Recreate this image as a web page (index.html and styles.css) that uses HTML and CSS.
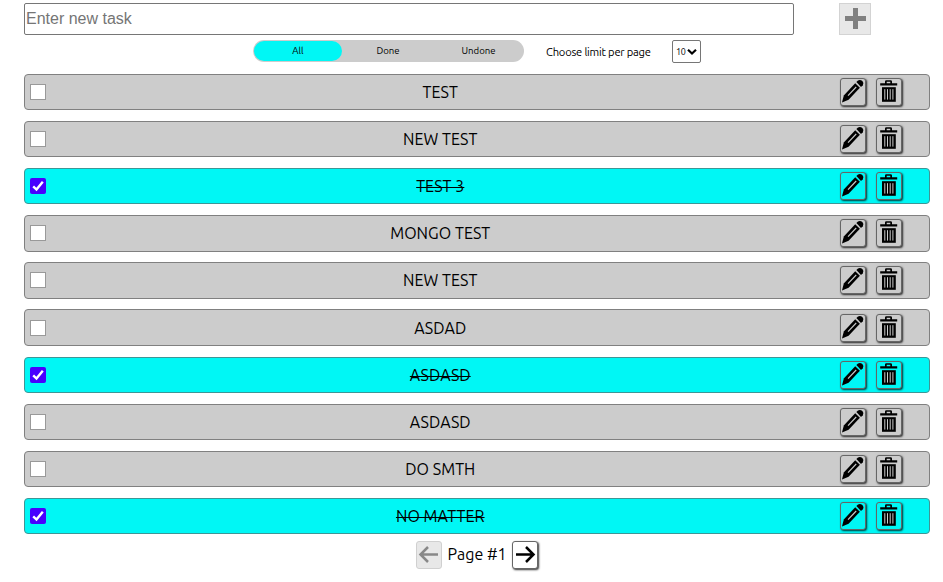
FILE: index.html
```
<!DOCTYPE html>
<html lang="en">
<head>
<meta charset="utf-8">
<title>Tasks</title>
<link rel="stylesheet" href="styles.css">
</head>
<body>
<svg class="defs" aria-hidden="true">
  <symbol id="pencil" viewBox="0 0 24 26">
    <path d="M1 23.4 2.8 16.6 14.2 4.2 18.9 8.8 7.6 20.8Z"/>
    <path d="M15.4 3 17 1.4Q19.2.2 21.4 2.1 23.2 4.2 21.8 6.2L20 8Z"/>
    <path class="shine" d="M7 16.7 15.2 8"/>
  </symbol>
  <symbol id="trash" viewBox="0 0 24 26">
    <path d="M3.2 4.2H8V2.6Q8 1.2 9.4 1.2H13.6Q15 1.2 15 2.6V4.2H20.2V6.6H3.2ZM9.7 4.2H13.3V2.8H9.7Z" fill-rule="evenodd"/>
    <path d="M5 8.2H18.8V22.8H5Z"/>
    <path class="slats" d="M7.8 10.2V20.6M10.5 10.2V20.6M13.2 10.2V20.6M15.9 10.2V20.6"/>
  </symbol>
</svg>
<main class="app">
  <form class="new-task">
    <input class="new-task-input" type="text" placeholder="Enter new task">
    <button class="add" type="button" disabled aria-label="Add"><svg viewBox="0 0 30 30"><path d="M5 14.5H26M15.5 4V25"/></svg></button>
  </form>
  <div class="toolbar">
    <div class="tabs"><span class="tab active">All</span><span class="tab">Done</span><span class="tab">Undone</span></div>
    <span class="limit-label">Choose limit per page</span>
    <div class="limit"><span>10</span><svg viewBox="0 0 10 8"><path d="M1 1.8 5 5.6 9 1.8"/></svg></div>
  </div>
  <ul class="tasks" id="tasks"></ul>
  <nav class="pager">
    <button class="page-btn" disabled aria-label="Previous"><svg viewBox="0 0 24 26"><path d="M21 12.5H3.5M11 5 3.5 12.5 11 20"/></svg></button>
    <span class="page-label">Page #1</span>
    <button class="page-btn" aria-label="Next"><svg viewBox="0 0 24 26"><path d="M3 12.5H20.5M13 5 20.5 12.5 13 20"/></svg></button>
  </nav>
</main>
<script src="app.js"></script>
</body>
</html>
```
FILE: app.js
```
const tasks = [
  ["TEST", false], ["NEW TEST", false], ["TEST 3", true], ["MONGO TEST", false],
  ["NEW TEST", false], ["ASDAD", false], ["ASDASD", true], ["ASDASD", false],
  ["DO SMTH", false], ["NO MATTER", true]
];
document.getElementById("tasks").innerHTML = tasks.map(([name, done]) => `
  <li class="task${done ? " done" : ""}">
    <span class="check">${done ? '<svg viewBox="0 0 16 16"><path d="M3.2 8.3 6.5 11.5 12.8 3.8"/></svg>' : ""}</span>
    <span class="name"><span>${name}</span></span>
    <button class="icon-btn" aria-label="Edit"><svg><use href="#pencil"/></svg></button>
    <button class="icon-btn" aria-label="Delete"><svg><use href="#trash"/></svg></button>
  </li>`).join("");
```
FILE: styles.css
```
* { box-sizing: border-box; }
body { min-height: 582px; margin: 0; background: #fff; color: #000; font-family: Ubuntu, "Noto Sans", sans-serif; font-size: 16px; }
.defs { display: block; width: 0; height: 0; }
.app { width: 906px; margin-left: 24px; padding-top: 3px; }
button { padding: 0; font: inherit; }
svg { display: block; }

.new-task { display: flex; height: 32px; margin: 0; }
.new-task-input { width: 770px; height: 32px; padding: 0 1px; border: 1px solid #767676; border-radius: 2px; font: 16px "Liberation Sans", sans-serif; }
.new-task-input::placeholder { color: #757575; }
.add { width: 32px; height: 32px; margin-left: 45px; border: 1px solid #d3d3d3; background: #e8e8e8; }
.add svg { width: 30px; height: 30px; fill: none; stroke: #808080; stroke-width: 5; }

.toolbar { display: flex; height: 23px; margin-top: 5px; margin-left: 229px; }
.tabs { display: flex; justify-content: space-between; width: 271px; height: 22px; padding: 1px; background: #ccc; border-radius: 11px; }
.tab { width: 89px; height: 20px; border-radius: 10px; text-align: center; font-size: 9.6px; line-height: 19px; }
.tab.active { width: 88px; background: #00f7f5; }
.limit-label { width: 126px; margin-left: 22px; font-size: 11.2px; line-height: 24px; white-space: nowrap; letter-spacing: -.22px; }
.limit { display: flex; align-items: center; width: 29px; height: 23px; padding-left: 3px; border: 1px solid #767676; border-radius: 2px; font-size: 9px; letter-spacing: -.3px; }
.limit svg { flex: none; width: 10px; height: 8px; margin-left: 1.5px; fill: none; stroke: #000; stroke-width: 2.2; }

.tasks { display: flex; flex-direction: column; gap: 10.69px; margin: 10.85px 0 0; padding: 0; list-style: none; }
.task { display: flex; align-items: center; height: 36.423px; padding-left: 5px; background: #ccc; border: 1px solid #808080; border-radius: 4px; }
.task.done { background: #00f7f5; border-color: #3e9696; }
.check { width: 16px; height: 16px; background: #fff; border: 1px solid #999; }
.done .check { background: #4800ff; border: 0; border-radius: 2px; }
.check svg { width: 16px; height: 16px; fill: none; stroke: #fff; stroke-width: 2.4; }
.name { width: 789px; padding-right: .5px; margin-right: 5px; text-align: center; line-height: 24px; letter-spacing: .06px; }
.done .name span { text-decoration: line-through; text-decoration-thickness: 1px; }
.icon-btn, .page-btn { width: 26px; height: 28px; border: 1px solid #666; border-radius: 3px; background: transparent; box-shadow: 1px 1px 2px #000c; color: #000; }
.icon-btn { margin-right: 10px; background: #ccc; }
.done .icon-btn { background: #00f7f5; }
.icon-btn svg { width: 24px; height: 26px; fill: #000; }
.shine { stroke: #ccc; stroke-width: 1.1; }
.slats { stroke: #ccc; stroke-width: 1; }

.pager { display: flex; align-items: center; justify-content: center; height: 28px; margin-top: 7px; }
.page-label { width: 70px; padding-bottom: 2px; text-align: center; }
.page-btn { background: #fff; }
.page-btn svg { width: 24px; height: 26px; fill: none; stroke: #000; stroke-width: 2.5; }
.page-btn:disabled { background: #e8e8e8; border-color: #d0d0d0; box-shadow: none; }
.page-btn:disabled svg { stroke: #888; }
```
